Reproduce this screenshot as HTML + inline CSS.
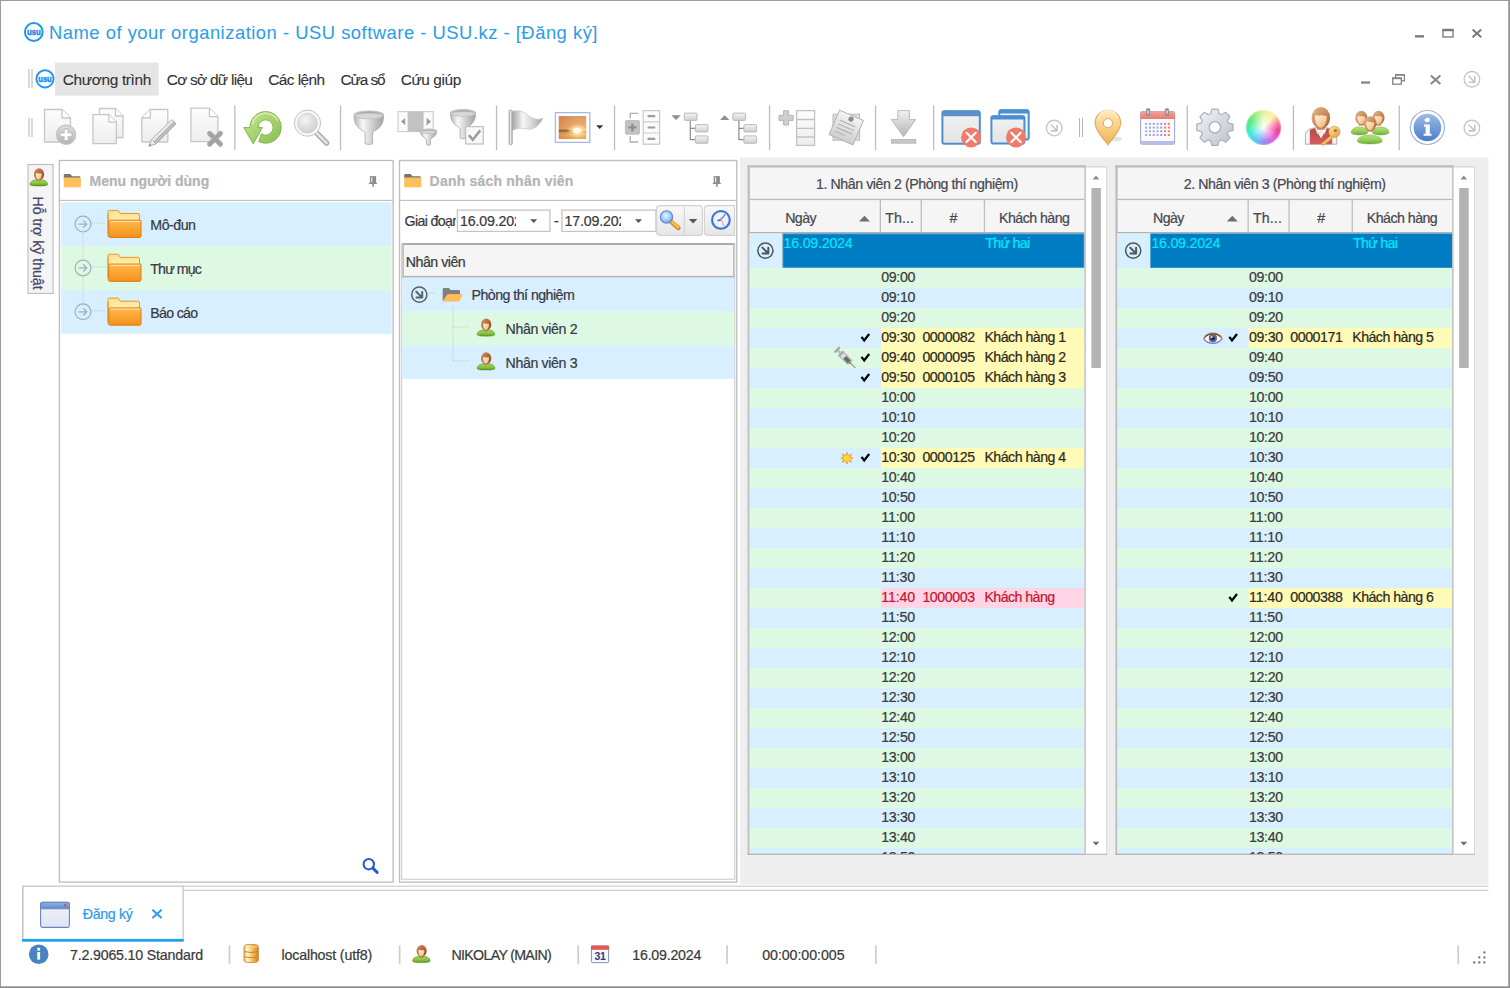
<!DOCTYPE html>
<html><head><meta charset="utf-8"><title>USU</title>
<style>
html,body{margin:0;padding:0;}
body{width:1510px;height:988px;position:relative;overflow:hidden;background:#fff;
 font-family:"Liberation Sans",sans-serif;}
div,span.t{position:absolute;}
span.t{white-space:nowrap;-webkit-text-stroke:0.22px currentColor;}
svg.ov{position:absolute;left:0;top:0;}
</style></head>
<body>
<div style="left:1246.2px;top:109.7px;width:35px;height:35px;border-radius:50%;background:radial-gradient(circle at 50% 50%,rgba(255,255,255,1) 0%,rgba(255,255,255,.7) 16%,rgba(255,255,255,0) 58%),conic-gradient(from 0deg,#dff5a4 0deg,#fff3a0 40deg,#f86a9c 80deg,#ee3f97 100deg,#e560dc 140deg,#9a86ea 175deg,#6ab4f4 200deg,#40e6ee 235deg,#40f0b0 265deg,#5ee878 300deg,#a8f090 335deg,#dff5a4 360deg);box-shadow:inset 0 0 2px rgba(255,255,255,.6);"></div>
<svg class="ov" width="1510" height="988" viewBox="0 0 1510 988"><defs>
<linearGradient id="gDoc" x1="0" y1="0" x2="0" y2="1"><stop offset="0" stop-color="#fdfdfd"/><stop offset="1" stop-color="#ededed"/></linearGradient>
<linearGradient id="gGray" x1="0" y1="0" x2="0" y2="1"><stop offset="0" stop-color="#e6e6e6"/><stop offset="1" stop-color="#a9a9a9"/></linearGradient>
<linearGradient id="gGray2" x1="0" y1="0" x2="0" y2="1"><stop offset="0" stop-color="#d2d2d2"/><stop offset="1" stop-color="#9a9a9a"/></linearGradient>
<linearGradient id="gGrayH" x1="0" y1="0" x2="1" y2="0"><stop offset="0" stop-color="#a4a4a4"/><stop offset=".35" stop-color="#f6f6f6"/><stop offset=".7" stop-color="#cfcfcf"/><stop offset="1" stop-color="#a0a0a0"/></linearGradient>
<linearGradient id="gBox" x1="0" y1="0" x2="0" y2="1"><stop offset="0" stop-color="#f4f4f4"/><stop offset="1" stop-color="#cfcfcf"/></linearGradient>
<linearGradient id="gFolder" x1="0" y1="0" x2="0" y2="1"><stop offset="0" stop-color="#ffc46a"/><stop offset=".12" stop-color="#ffb548"/><stop offset="1" stop-color="#f4901a"/></linearGradient>
<linearGradient id="gFolderB" x1="0" y1="0" x2="0" y2="1"><stop offset="0" stop-color="#ffdf8a"/><stop offset=".5" stop-color="#fff0b4"/><stop offset="1" stop-color="#ffd070"/></linearGradient>
<linearGradient id="gGreen" x1="0" y1="0" x2="1" y2="1"><stop offset="0" stop-color="#c8e89a"/><stop offset="1" stop-color="#86be4c"/></linearGradient>
<linearGradient id="gBody" x1="0" y1="0" x2="0" y2="1"><stop offset="0" stop-color="#a2d860"/><stop offset=".6" stop-color="#86c43c"/><stop offset="1" stop-color="#5c9422"/></linearGradient>
<linearGradient id="gSkin" x1="0" y1="0" x2="1" y2="1"><stop offset="0" stop-color="#fff0d8"/><stop offset=".6" stop-color="#f6cf9c"/><stop offset="1" stop-color="#d89a60"/></linearGradient>
<linearGradient id="gHair" x1="0" y1="0" x2="1" y2="1"><stop offset="0" stop-color="#d8935a"/><stop offset=".5" stop-color="#b8683a"/><stop offset="1" stop-color="#8a3c1c"/></linearGradient>
<linearGradient id="gHairL" x1="0" y1="0" x2="1" y2="1"><stop offset="0" stop-color="#e8bc90"/><stop offset=".5" stop-color="#c88c5c"/><stop offset="1" stop-color="#a0633a"/></linearGradient>
<linearGradient id="gBodyL" x1="0" y1="0" x2="0" y2="1"><stop offset="0" stop-color="#b8e284"/><stop offset=".6" stop-color="#92cc54"/><stop offset="1" stop-color="#6fa83a"/></linearGradient>
<linearGradient id="gPlus" x1="0" y1="0" x2="0" y2="1"><stop offset="0" stop-color="#dedede"/><stop offset="1" stop-color="#b2b2b2"/></linearGradient>
<linearGradient id="gSunL" x1="0" y1="0" x2="1" y2="0"><stop offset="0" stop-color="#c8703c" stop-opacity=".55"/><stop offset=".65" stop-color="#d88a50" stop-opacity="0"/></linearGradient>
<linearGradient id="gPencil" x1="0" y1="0" x2="0" y2="1"><stop offset="0" stop-color="#f4f4f4"/><stop offset=".5" stop-color="#d8d8d8"/><stop offset="1" stop-color="#b0b0b0"/></linearGradient>
<linearGradient id="gDown" x1="0" y1="0" x2="0" y2="1"><stop offset="0" stop-color="#f2f2f2"/><stop offset="1" stop-color="#b4b4b4"/></linearGradient>
<linearGradient id="gInfo" x1="0" y1="0" x2="0" y2="1"><stop offset="0" stop-color="#9cbce8"/><stop offset="1" stop-color="#4c7cc8"/></linearGradient>
<linearGradient id="gPin" x1="0" y1="0" x2="0" y2="1"><stop offset="0" stop-color="#ffe9b8"/><stop offset=".5" stop-color="#f8cf84"/><stop offset="1" stop-color="#eeb25a"/></linearGradient>
<linearGradient id="gGear" x1="0" y1="0" x2="1" y2="1"><stop offset="0" stop-color="#f2f4f7"/><stop offset="1" stop-color="#bcc2cc"/></linearGradient>
<linearGradient id="gSun" x1="0" y1="0" x2="0" y2="1"><stop offset="0" stop-color="#dd9a62"/><stop offset=".45" stop-color="#ecab6a"/><stop offset=".62" stop-color="#f6c27c"/><stop offset=".7" stop-color="#c89a58"/><stop offset=".8" stop-color="#f0bc6c"/><stop offset="1" stop-color="#e8a554"/></linearGradient>
<linearGradient id="gBtn" x1="0" y1="0" x2="0" y2="1"><stop offset="0" stop-color="#f8f8f8"/><stop offset="1" stop-color="#e6e6e6"/></linearGradient>
<linearGradient id="gWin" x1="0" y1="0" x2="0" y2="1"><stop offset="0" stop-color="#f2f2f2"/><stop offset="1" stop-color="#e4e4e4"/></linearGradient>
<linearGradient id="gDb" x1="0" y1="0" x2="1" y2="0"><stop offset="0" stop-color="#e8a850"/><stop offset=".2" stop-color="#fffbe4"/><stop offset=".5" stop-color="#f4d060"/><stop offset="1" stop-color="#dc7c28"/></linearGradient>
<linearGradient id="gRedCal" x1="0" y1="0" x2="0" y2="1"><stop offset="0" stop-color="#f4a49a"/><stop offset="1" stop-color="#e87c70"/></linearGradient>
<linearGradient id="gVest" x1="0" y1="0" x2="0" y2="1"><stop offset="0" stop-color="#b84848"/><stop offset="1" stop-color="#d85c5c"/></linearGradient>
<linearGradient id="gKey" x1="0" y1="0" x2="1" y2="1"><stop offset="0" stop-color="#ffe49c"/><stop offset="1" stop-color="#e8a03c"/></linearGradient>
<linearGradient id="gTabT" x1="0" y1="0" x2="0" y2="1"><stop offset="0" stop-color="#8eb4e4"/><stop offset="1" stop-color="#5c8ccc"/></linearGradient>
<linearGradient id="gTabB" x1="0" y1="0" x2="0" y2="1"><stop offset="0" stop-color="#f2f4fb"/><stop offset="1" stop-color="#dfe4f3"/></linearGradient>
<radialGradient id="gLens" cx=".4" cy=".35" r=".75"><stop offset="0" stop-color="#f4f4f4"/><stop offset="1" stop-color="#c6c6c6"/></radialGradient>
<radialGradient id="gLensB" cx=".45" cy=".4" r=".7"><stop offset="0" stop-color="#e4f6ff"/><stop offset=".5" stop-color="#9cd0fc"/><stop offset="1" stop-color="#4c8ce4"/></radialGradient>
<radialGradient id="gWhite" cx=".5" cy=".5" r=".5"><stop offset="0" stop-color="#fff" stop-opacity="1"/><stop offset=".35" stop-color="#fff" stop-opacity=".85"/><stop offset="1" stop-color="#fff" stop-opacity="0"/></radialGradient>
<radialGradient id="gSunSpot" cx=".5" cy=".5" r=".5"><stop offset="0" stop-color="#fffbe0" stop-opacity="1"/><stop offset=".4" stop-color="#ffe8a8" stop-opacity=".8"/><stop offset="1" stop-color="#ffd890" stop-opacity="0"/></radialGradient>
<radialGradient id="gClock" cx=".5" cy=".5" r=".5"><stop offset="0" stop-color="#ffffff"/><stop offset=".75" stop-color="#e8f2ff"/><stop offset="1" stop-color="#a8c8f8"/></radialGradient>
<linearGradient id="gBowl" x1="0" y1="0" x2="1" y2="0"><stop offset="0" stop-color="#b4b4b4"/><stop offset=".3" stop-color="#f8f8f8"/><stop offset=".65" stop-color="#cacaca"/><stop offset="1" stop-color="#a2a2a2"/></linearGradient>
<linearGradient id="gBowlIn" x1="0" y1="0" x2="0" y2="1"><stop offset="0" stop-color="#9a9a9a"/><stop offset="1" stop-color="#e8e8e8"/></linearGradient>
</defs>
<rect x="740.00" y="157.50" width="748.50" height="727.00" fill="#eeeeee"/>
<rect x="0.00" y="0.00" width="1510.00" height="1.00" fill="#9c9c9c"/>
<rect x="0.00" y="0.00" width="1.00" height="988.00" fill="#9c9c9c"/>
<rect x="1508.30" y="0.00" width="1.70" height="988.00" fill="#8e8e8e"/>
<rect x="0.00" y="986.30" width="1510.00" height="1.70" fill="#8e8e8e"/>
<g transform="translate(33.80,32.00)"><circle r="8.9" fill="#fff" stroke="#2196f3" stroke-width="2"/><text x="-6.93" y="3.1" font-family="Liberation Sans" font-weight="bold" font-size="9.4" fill="#1e88e5" stroke="#1e88e5" stroke-width=".45" textLength="13.86" lengthAdjust="spacingAndGlyphs">usu</text></g>
<rect x="1415" y="35.2" width="9" height="2.3" fill="#787878"/><rect x="1443" y="30.4" width="10" height="6.6" fill="none" stroke="#787878" stroke-width="1.3"/><rect x="1442.4" y="28.8" width="11.2" height="2.4" fill="#787878"/><path d="M1472.6,29.6 L1481.2,37.2 M1481.2,29.6 L1472.6,37.2" stroke="#787878" stroke-width="2"/>
<rect x="1361" y="81.4" width="9" height="2.3" fill="#858585"/><rect x="1395.6" y="74.8" width="8.8" height="6" fill="none" stroke="#858585" stroke-width="1.3"/><rect x="1392.7" y="78.2" width="8.6" height="6" fill="#fff" stroke="#858585" stroke-width="1.3"/><rect x="1392" y="77.4" width="10" height="1.8" fill="#858585"/><rect x="1395" y="74.1" width="10" height="1.6" fill="#858585"/><path d="M1430.8,75.6 L1440.4,84 M1440.4,75.6 L1430.8,84" stroke="#858585" stroke-width="2"/>
<g transform="translate(28.50,69.00)"><rect x="0" y="0" width="1" height="19" fill="#b4b4b4"/><rect x="3" y="0" width="1" height="19" fill="#b4b4b4"/></g>
<rect x="55.00" y="62.60" width="103.60" height="33.00" fill="#e5e5e5"/>
<g transform="translate(45.00,78.80)"><circle r="8.6" fill="#fff" stroke="#2196f3" stroke-width="2"/><text x="-6.72" y="3.1" font-family="Liberation Sans" font-weight="bold" font-size="9.4" fill="#1e88e5" stroke="#1e88e5" stroke-width=".45" textLength="13.44" lengthAdjust="spacingAndGlyphs">usu</text></g>
<g transform="translate(28.50,118.00)"><rect x="0" y="0" width="1" height="19" fill="#b4b4b4"/><rect x="3" y="0" width="1" height="19" fill="#b4b4b4"/></g>
<g transform="translate(1079.00,118.00)"><rect x="0" y="0" width="1" height="19" fill="#b4b4b4"/><rect x="3" y="0" width="1" height="19" fill="#b4b4b4"/></g>
<g transform="translate(234.20,105.50)"><rect x="0" y="0" width="1.3" height="44.5" fill="#bdbdbd"/></g>
<g transform="translate(339.90,105.50)"><rect x="0" y="0" width="1.3" height="44.5" fill="#bdbdbd"/></g>
<g transform="translate(495.90,105.50)"><rect x="0" y="0" width="1.3" height="44.5" fill="#bdbdbd"/></g>
<g transform="translate(613.90,105.50)"><rect x="0" y="0" width="1.3" height="44.5" fill="#bdbdbd"/></g>
<g transform="translate(768.90,105.50)"><rect x="0" y="0" width="1.3" height="44.5" fill="#bdbdbd"/></g>
<g transform="translate(874.90,105.50)"><rect x="0" y="0" width="1.3" height="44.5" fill="#bdbdbd"/></g>
<g transform="translate(933.00,105.50)"><rect x="0" y="0" width="1.3" height="44.5" fill="#bdbdbd"/></g>
<g transform="translate(1186.60,105.50)"><rect x="0" y="0" width="1.3" height="44.5" fill="#bdbdbd"/></g>
<g transform="translate(1292.80,105.50)"><rect x="0" y="0" width="1.3" height="44.5" fill="#bdbdbd"/></g>
<g transform="translate(1398.60,105.50)"><rect x="0" y="0" width="1.3" height="44.5" fill="#bdbdbd"/></g>
<g transform="translate(44.00,109.00)"><path d="M0.5,0.5 H18 L26.5,9 V33.0 H0.5 Z" fill="url(#gDoc)" stroke="#c6c6c6" stroke-width="1.3" stroke-linejoin="round"/><path d="M18,0.5 V9 H26.5" fill="#fff" stroke="#c6c6c6" stroke-width="1.3" stroke-linejoin="round"/></g>
<circle cx="66.1" cy="134.8" r="9.6" fill="url(#gPlus)" stroke="#c4c4c4" stroke-width="1.2"/><path d="M66.1,128.6 V141 M59.9,134.8 H72.3" stroke="#b6b6b6" stroke-width="4.6"/><path d="M66.1,129.4 V140.2 M60.7,134.8 H71.5" stroke="#fff" stroke-width="3"/>
<g transform="translate(99.00,108.00)"><path d="M0.5,0.5 H16.5 L24.0,8 V29.5 H0.5 Z" fill="url(#gDoc)" stroke="#c6c6c6" stroke-width="1.3" stroke-linejoin="round"/><path d="M16.5,0.5 V8 H24.0" fill="#fff" stroke="#c6c6c6" stroke-width="1.3" stroke-linejoin="round"/></g>
<g transform="translate(92.40,114.20)"><path d="M0.5,0.5 H16.5 L24.0,8 V29.5 H0.5 Z" fill="url(#gDoc)" stroke="#c6c6c6" stroke-width="1.3" stroke-linejoin="round"/><path d="M16.5,0.5 V8 H24.0" fill="#fff" stroke="#c6c6c6" stroke-width="1.3" stroke-linejoin="round"/></g>
<g transform="translate(141.30,109.00)"><path d="M9,0.5 H26.5 V33.0 H0.5 V9 Z" fill="url(#gDoc)" stroke="#c6c6c6" stroke-width="1.3" stroke-linejoin="round"/><path d="M9,0.5 V9 H0.5" fill="#fff" stroke="#c6c6c6" stroke-width="1.3" stroke-linejoin="round"/></g>
<g transform="translate(149,146.2) rotate(-44.5)"><path d="M0,0 L6.6,-3.1 H33.6 Q35.2,-3.1 35.2,-1.5 V1.5 Q35.2,3.1 33.6,3.1 H6.6 Z" fill="url(#gPencil)" stroke="#a6a6a6" stroke-width=".8"/><path d="M0,0 L6.6,-3.1 V3.1 Z" fill="#ececec" stroke="#a6a6a6" stroke-width=".6"/><path d="M0,0 L2.4,-1.1 V1.1 Z" fill="#808080"/><path d="M6.6,0.6 H35" stroke="#9a9a9a" stroke-width=".8"/></g>
<g transform="translate(190.40,107.70)"><path d="M0.5,0.5 H19 L27.5,9 V34.0 H0.5 Z" fill="url(#gDoc)" stroke="#c6c6c6" stroke-width="1.3" stroke-linejoin="round"/><path d="M19,0.5 V9 H27.5" fill="#fff" stroke="#c6c6c6" stroke-width="1.3" stroke-linejoin="round"/></g>
<path d="M209.6,133.4 L220.4,144.2 M220.4,133.4 L209.6,144.2" stroke="#adadad" stroke-width="5.2" stroke-linecap="round"/><path d="M209.6,133.4 L220.4,144.2 M220.4,133.4 L209.6,144.2" stroke="#949494" stroke-width="2.4" stroke-linecap="round" opacity=".5"/>
<path d="M250,127.6 A15.6,15.8 0 1 1 258.8,141.6 L261.3,133.8 A7.5,7.7 0 1 0 258.1,127.6 H262.4 L253.2,143.8 L243.7,127.6 Z" fill="url(#gGreen)" stroke="#86b84e" stroke-width="1" stroke-linejoin="round"/><path d="M252.4,124 A13.6,13.6 0 0 1 278,121" fill="none" stroke="#dcf2b8" stroke-width="1.6" opacity=".8"/>
<path d="M316.6,133 L326.6,143" stroke="#a9a9a9" stroke-width="5.4" stroke-linecap="round"/><path d="M316.6,133 L326.6,143" stroke="#e4e4e4" stroke-width="2.6" stroke-linecap="round"/><circle cx="307.5" cy="123.2" r="11.5" fill="url(#gLens)" stroke="#c2c2c2" stroke-width="1"/><circle cx="307.5" cy="123.2" r="11.5" fill="none" stroke="#f7f7f7" stroke-width="3"/><circle cx="307.5" cy="123.2" r="13.1" fill="none" stroke="#c4c4c4" stroke-width="1"/><circle cx="307.5" cy="123.2" r="9.8" fill="none" stroke="#cdcdcd" stroke-width=".9"/>
<path d="M354,114.26100000000001 C354,130.352 364.15000000000003,129.352 365.15000000000003,133.352 V143.7 Q368.85,145.29999999999998 372.55,143.7 V133.352 C373.55,129.352 383.7,130.352 383.7,114.26100000000001 Z" fill="url(#gBowl)" stroke="#a6a6a6" stroke-width=".8"/><ellipse cx="368.85" cy="114.861" rx="14.45" ry="3.861" fill="url(#gBowlIn)" stroke="#c4c4c4" stroke-width="1.2"/><ellipse cx="368.85" cy="115.66100000000002" rx="12.45" ry="2.3166" fill="#d9d9d9" opacity=".8"/>
<rect x="398" y="111.6" width="35.2" height="20" fill="#fbfbfb" stroke="#cfcfcf" stroke-width="1.2"/><rect x="407.6" y="111.6" width="16" height="20" fill="#c2c2c2"/><path d="M401,121.6 l4.2,-3.6 v7.2 Z M431,121.6 l-4.4,-3.8 v7.6 Z" fill="#9c9c9c"/>
<path d="M420.2,130.558 C420.2,137.40800000000002 425.5,136.40800000000002 426.5,140.40800000000002 V144.6 Q428.5,146.2 430.5,144.6 V140.40800000000002 C431.5,136.40800000000002 436.8,137.40800000000002 436.8,130.558 Z" fill="url(#gBowl)" stroke="#a6a6a6" stroke-width=".8"/><ellipse cx="428.5" cy="131.158" rx="7.9" ry="2.1580000000000004" fill="url(#gBowlIn)" stroke="#c4c4c4" stroke-width="1.2"/><ellipse cx="428.5" cy="131.958" rx="5.9" ry="1.2948000000000002" fill="#d9d9d9" opacity=".8"/>
<path d="M450.4,112.276 C450.4,126.328 459.2,125.328 460.2,129.328 V138.2 Q463.0,139.79999999999998 465.8,138.2 V129.328 C466.8,125.328 475.59999999999997,126.328 475.59999999999997,112.276 Z" fill="url(#gBowl)" stroke="#a6a6a6" stroke-width=".8"/><ellipse cx="463.0" cy="112.87599999999999" rx="12.2" ry="3.276" fill="url(#gBowlIn)" stroke="#c4c4c4" stroke-width="1.2"/><ellipse cx="463.0" cy="113.676" rx="10.2" ry="1.9655999999999998" fill="#d9d9d9" opacity=".8"/>
<rect x="465.6" y="126.6" width="17.6" height="17.4" fill="#f8f8f8" stroke="#c2c2c2" stroke-width="1.3"/><path d="M468.8,135.2 L472.8,139.8 L480.2,130.4" fill="none" stroke="#9e9e9e" stroke-width="2.6"/>
<path d="M512.2,111.4 C518,109.6 524,111.6 527,114.6 C531,118.6 538,120.4 543,118.2 C539,126.6 532,130.4 527.4,129.2 C522,127.6 517,128.2 512.2,130.6 Z" fill="url(#gGrayH)" stroke="#c9c9c9" stroke-width=".7"/><rect x="509" y="110" width="3.3" height="34.8" rx="1.2" fill="url(#gGrayH)" stroke="#9f9f9f" stroke-width=".7"/>
<rect x="555.4" y="112.6" width="34.4" height="29.8" fill="#fff" stroke="#a9b7e0" stroke-width="1.3"/><rect x="558.8" y="116" width="27.4" height="23" fill="url(#gSun)"/><rect x="558.8" y="116" width="27.4" height="23" fill="url(#gSunL)"/><path d="M558.8,129.6 H566 Q570,130 573,131 L566,131.8 H558.8 Z" fill="#7a5a34" opacity=".75"/><ellipse cx="577.4" cy="131" rx="10.5" ry="8" fill="url(#gSunSpot)"/><ellipse cx="577" cy="130.6" rx="4" ry="2.8" fill="#fffdf0" opacity=".9"/><path d="M596.2,125.2 h7 l-3.5,3.8 Z" fill="#333"/>
<path d="M630.2,118.6 V113.4 H638.4 M630.2,136 V142 H638.4" fill="none" stroke="#b0b0b0" stroke-width="1.3"/><rect x="625.4" y="120.6" width="14" height="13.6" rx="1" fill="#c3c3c3" stroke="#b2b2b2" stroke-width=".8"/><path d="M632.4,123.4 V131.4 M628.4,127.4 H636.4" stroke="#8e8e8e" stroke-width="2.2"/><rect x="643.2" y="110.6" width="16.4" height="33.6" fill="#fbfbfb" stroke="#cbcbcb" stroke-width="1.3"/><path d="M643.2,121.9 H659.6 M643.2,133 H659.6" stroke="#cbcbcb" stroke-width="1.2"/><path d="M647.6,116.2 H655.2 M647.6,127.5 H655.2 M647.6,138.8 H655.2" stroke="#9c9c9c" stroke-width="2.2"/>
<path d="M671.4,115.3 h9.4 l-4.7,4.8 Z" fill="#8e8e8e"/><path d="M690.3,120.4 V139.6 H695.3 M690.3,128.3 H695.3" fill="none" stroke="#8c8c8c" stroke-width="1.2"/><rect x="684.3" y="113.1" width="12.7" height="7.3" rx="1" fill="url(#gBox)" stroke="#b9b9b9" stroke-width="1"/><rect x="695.3" y="124.6" width="12.7" height="7.3" rx="1" fill="url(#gBox)" stroke="#b9b9b9" stroke-width="1"/><rect x="695.3" y="135.9" width="12.7" height="7.3" rx="1" fill="url(#gBox)" stroke="#b9b9b9" stroke-width="1"/>
<path d="M720,120 h9.4 l-4.7,-4.8 Z" fill="#8e8e8e"/><path d="M738.9,120.4 V139.6 H743.9 M738.9,128.3 H743.9" fill="none" stroke="#8c8c8c" stroke-width="1.2"/><rect x="732.9" y="113.1" width="12.7" height="7.3" rx="1" fill="url(#gBox)" stroke="#b9b9b9" stroke-width="1"/><rect x="743.9" y="124.6" width="12.7" height="7.3" rx="1" fill="url(#gBox)" stroke="#b9b9b9" stroke-width="1"/><rect x="743.9" y="135.9" width="12.7" height="7.3" rx="1" fill="url(#gBox)" stroke="#b9b9b9" stroke-width="1"/>
<path d="M783.6,110.8 h5 v4.6 h4.6 v5 h-4.6 v4.6 h-5 v-4.6 h-4.6 v-5 h4.6 Z" fill="#cfcfcf" stroke="#b4b4b4" stroke-width="1"/><rect x="796.6" y="110.6" width="18" height="34.8" fill="url(#gDoc)" stroke="#c2c2c2" stroke-width="1.3"/><path d="M796.6,119.5 H814.6 M796.6,128.3 H814.6 M796.6,137 H814.6" stroke="#c2c2c2" stroke-width="1.3"/>
<rect x="833" y="114.2" width="26.6" height="26" fill="#dedede" stroke="#b9b9b9" stroke-width="1"/><g transform="translate(839.6,110.2) rotate(23.5)"><rect x="0" y="0" width="26" height="26.4" fill="url(#gBox)" stroke="#b4b4b4" stroke-width="1"/><path d="M4,9 H21 M4,13 H21 M4,17 H21 M4,21 H15" stroke="#b3b3b3" stroke-width="1.2"/><circle cx="14" cy="3.6" r="2.6" fill="#8c8c8c"/></g>
<path d="M897.8,110.6 H909.4 V119.6 H915.6 L903.6,136.8 L891.4,119.6 H897.8 Z" fill="url(#gDown)" stroke="#b9b9b9" stroke-width="1" stroke-linejoin="round"/><rect x="891.4" y="139.4" width="24.4" height="3.8" fill="#c6c6c6" stroke="#b4b4b4" stroke-width=".8"/>
<rect x="942.4" y="111.3" width="37.4" height="32.4" rx="2" fill="url(#gWin)" stroke="#4a8fd2" stroke-width="2"/><path d="M942,113 Q942,110.6 944.4,110.6 H977.8 Q980.2,110.6 980.2,113 V116.2 H942 Z" fill="#5b8ecb"/>
<circle cx="971.1" cy="137.4" r="10" fill="#ef7b6c"/><path d="M966.5,132.8 L975.7,142.0 M975.7,132.8 L966.5,142.0" stroke="#fff" stroke-width="2.1" stroke-linecap="round"/>
<rect x="999.3" y="110.2" width="29.4" height="29.4" rx="2.4" fill="#f4f4f4" stroke="#4a8fd2" stroke-width="2"/><rect x="998.8" y="109.6" width="30.4" height="4" rx="1.6" fill="#4a8fd2"/><rect x="991.4" y="116.2" width="33" height="27.4" rx="2.4" fill="url(#gWin)" stroke="#4a8fd2" stroke-width="2"/><rect x="990.6" y="115.4" width="34.6" height="4.2" rx="1.8" fill="#4a8fd2"/>
<circle cx="1016" cy="137.4" r="10" fill="#ef7b6c"/><path d="M1011.4,132.8 L1020.6,142.0 M1020.6,132.8 L1011.4,142.0" stroke="#fff" stroke-width="2.1" stroke-linecap="round"/>
<g transform="translate(1054.20,128.00)"><circle r="7.8" fill="none" stroke="#c6c6c6" stroke-width="1.35"/><path d="M-3,-3 L2.4,2.4 M-2.8,2.9 H2.9 V-2.8" fill="none" stroke="#c6c6c6" stroke-width="1.6" stroke-linecap="round" stroke-linejoin="round"/></g>
<g transform="translate(1471.90,128.00)"><circle r="7.8" fill="none" stroke="#c6c6c6" stroke-width="1.35"/><path d="M-3,-3 L2.4,2.4 M-2.8,2.9 H2.9 V-2.8" fill="none" stroke="#c6c6c6" stroke-width="1.6" stroke-linecap="round" stroke-linejoin="round"/></g>
<g transform="translate(1471.90,79.30)"><circle r="7.8" fill="none" stroke="#c6c6c6" stroke-width="1.35"/><path d="M-3,-3 L2.4,2.4 M-2.8,2.9 H2.9 V-2.8" fill="none" stroke="#c6c6c6" stroke-width="1.6" stroke-linecap="round" stroke-linejoin="round"/></g>
<ellipse cx="1116" cy="139" rx="6" ry="2.6" fill="#000" opacity=".10"/><path d="M1107.9,144.8 C1104.5,139 1095.1,132 1095.1,123 A12.8,12.8 0 0 1 1120.7,123 C1120.7,132 1111.3,139 1107.9,144.8 Z" fill="url(#gPin)" stroke="#e2aa5c" stroke-width="1.1"/><path d="M1098,119 A10,10 0 0 1 1117.6,118" fill="none" stroke="#fff4d8" stroke-width="1.6" opacity=".8"/><circle cx="1107.9" cy="123.2" r="4.6" fill="#fff" stroke="#dba668" stroke-width="1"/>
<rect x="1140.6" y="111.6" width="34" height="32.6" rx="1.8" fill="#fafbff" stroke="#a2a9da" stroke-width="1.1"/><path d="M1140.2,113.4 Q1140.2,111.2 1142.4,111.2 H1172.8 Q1175,111.2 1175,113.4 V119 H1140.2 Z" fill="url(#gRedCal)"/><rect x="1140.6" y="141" width="34" height="3.2" fill="#b6bde6"/><rect x="1146.4" y="108.6" width="3.6" height="7" rx="1" fill="#8a96ae" stroke="#7c879e" stroke-width=".5"/><rect x="1165.2" y="108.6" width="3.6" height="7" rx="1" fill="#8a96ae" stroke="#7c879e" stroke-width=".5"/><rect x="1147.5" y="110.6" width="1.4" height="3" fill="#dfe3ee"/><rect x="1166.3" y="110.6" width="1.4" height="3" fill="#dfe3ee"/><rect x="1145.20" y="122.90" width="2" height="2" fill="#a3a7d6"/><rect x="1148.97" y="122.90" width="2" height="2" fill="#a3a7d6"/><rect x="1152.74" y="122.90" width="2" height="2" fill="#a3a7d6"/><rect x="1156.51" y="122.90" width="2" height="2" fill="#a3a7d6"/><rect x="1160.28" y="122.90" width="2" height="2" fill="#8fa0d2"/><rect x="1164.05" y="122.90" width="2" height="2" fill="#f2786a"/><rect x="1167.82" y="122.90" width="2" height="2" fill="#f2786a"/><rect x="1145.20" y="126.59" width="2" height="2" fill="#a3a7d6"/><rect x="1148.97" y="126.59" width="2" height="2" fill="#a3a7d6"/><rect x="1152.74" y="126.59" width="2" height="2" fill="#a3a7d6"/><rect x="1156.51" y="126.59" width="2" height="2" fill="#a3a7d6"/><rect x="1160.28" y="126.59" width="2" height="2" fill="#8fa0d2"/><rect x="1164.05" y="126.59" width="2" height="2" fill="#f2786a"/><rect x="1167.82" y="126.59" width="2" height="2" fill="#f2786a"/><rect x="1145.20" y="130.28" width="2" height="2" fill="#a3a7d6"/><rect x="1148.97" y="130.28" width="2" height="2" fill="#a3a7d6"/><rect x="1152.74" y="130.28" width="2" height="2" fill="#a3a7d6"/><rect x="1156.51" y="130.28" width="2" height="2" fill="#a3a7d6"/><rect x="1160.28" y="130.28" width="2" height="2" fill="#8fa0d2"/><rect x="1164.05" y="130.28" width="2" height="2" fill="#f2786a"/><rect x="1167.82" y="130.28" width="2" height="2" fill="#f2786a"/><rect x="1145.20" y="133.97" width="2" height="2" fill="#a3a7d6"/><rect x="1148.97" y="133.97" width="2" height="2" fill="#a3a7d6"/><rect x="1152.74" y="133.97" width="2" height="2" fill="#a3a7d6"/><rect x="1156.51" y="133.97" width="2" height="2" fill="#a3a7d6"/><rect x="1160.28" y="133.97" width="2" height="2" fill="#8fa0d2"/><rect x="1164.05" y="133.97" width="2" height="2" fill="#f2786a"/><rect x="1167.82" y="133.97" width="2" height="2" fill="#f2786a"/>
<path d="M1210.70,113.73 L1211.79,109.17 L1218.01,109.17 L1219.10,113.73 L1221.53,114.74 L1225.52,112.28 L1229.92,116.68 L1227.46,120.67 L1228.47,123.10 L1233.03,124.19 L1233.03,130.41 L1228.47,131.50 L1227.46,133.93 L1229.92,137.92 L1225.52,142.32 L1221.53,139.86 L1219.10,140.87 L1218.01,145.43 L1211.79,145.43 L1210.70,140.87 L1208.27,139.86 L1204.28,142.32 L1199.88,137.92 L1202.34,133.93 L1201.33,131.50 L1196.77,130.41 L1196.77,124.19 L1201.33,123.10 L1202.34,120.67 L1199.88,116.68 L1204.28,112.28 L1208.27,114.74 Z" fill="url(#gGear)" stroke="#a9afbb" stroke-width="1.2" stroke-linejoin="round"/><circle cx="1214.9" cy="127.3" r="5.7" fill="#fff" stroke="#a9afbb" stroke-width="1.3"/>
<path d="M1305.4,144.2 V135.4 Q1305.4,129.4 1313,128.2 L1321,127 L1329,128.2 Q1336.8,129.4 1336.8,135.4 V144.2 Z" fill="#f4f4f4" stroke="#a8a8a8" stroke-width=".9"/><path d="M1309.8,144.2 V130 L1315,128 L1321,138.6 L1327,128 L1332.2,130 V144.2 Z" fill="url(#gVest)"/><path d="M1315,127.6 L1321,130.4 L1327,127.6 L1324.4,134 L1321,131.6 L1317.6,134 Z" fill="#fdfdfd" stroke="#b8b8b8" stroke-width=".5"/>
<g transform="translate(1320.90,107.30) scale(1.5)"><path d="M-2.6,11 H2.6 V15 H-2.6 Z" fill="#d09060"/><ellipse cx="0" cy="7" rx="6.2" ry="7.2" fill="url(#gHairL)"/><path d="M-3.9,5.6 C-2.4,4.8 -1,6.2 0.2,5.2 C1.6,6 3,5.4 3.9,5.8 C4.2,9.8 2.6,13.6 0,13.6 C-2.6,13.6 -4.2,9.8 -3.9,5.6 Z" fill="url(#gSkin)"/></g>
<g transform="translate(1334.4,131.8)"><path d="M-3.2,3.4 L-13.4,12.2 L-11,13.6 L-1.2,5.6 Z" fill="url(#gKey)" stroke="#d69a3e" stroke-width=".7"/><circle r="5.6" fill="url(#gKey)" stroke="#d69a3e" stroke-width=".8"/><circle cx="1" cy="-1.2" r="1.7" fill="#b07840"/></g>
<path d="M1351.1,132.5 C1351.1,125.13999999999999 1367.9,125.13999999999999 1367.9,132.5 C1367.9,135.72 1351.1,135.72 1351.1,132.5 Z" fill="url(#gBodyL)" stroke="#78b040" stroke-width=".5"/><path d="M1372.1999999999998,132.5 C1372.1999999999998,125.13999999999999 1389.0,125.13999999999999 1389.0,132.5 C1389.0,135.72 1372.1999999999998,135.72 1372.1999999999998,132.5 Z" fill="url(#gBodyL)" stroke="#78b040" stroke-width=".5"/>
<g transform="translate(1361.30,111.00) scale(0.98)"><path d="M-2.6,11 H2.6 V15 H-2.6 Z" fill="#d09060"/><ellipse cx="0" cy="7" rx="6.2" ry="7.2" fill="url(#gHairL)"/><path d="M-3.9,5.6 C-2.4,4.8 -1,6.2 0.2,5.2 C1.6,6 3,5.4 3.9,5.8 C4.2,9.8 2.6,13.6 0,13.6 C-2.6,13.6 -4.2,9.8 -3.9,5.6 Z" fill="url(#gSkin)"/></g><g transform="translate(1378.50,111.00) scale(0.98)"><path d="M-2.6,11 H2.6 V15 H-2.6 Z" fill="#d09060"/><ellipse cx="0" cy="7" rx="6.2" ry="7.2" fill="url(#gHairL)"/><path d="M-3.9,5.6 C-2.4,4.8 -1,6.2 0.2,5.2 C1.6,6 3,5.4 3.9,5.8 C4.2,9.8 2.6,13.6 0,13.6 C-2.6,13.6 -4.2,9.8 -3.9,5.6 Z" fill="url(#gSkin)"/></g>
<path d="M1357.3999999999999,141.2 C1357.3999999999999,132.88 1382.2,132.88 1382.2,141.2 C1382.2,144.84 1357.3999999999999,144.84 1357.3999999999999,141.2 Z" fill="url(#gBodyL)" stroke="#78b040" stroke-width=".5"/>
<g transform="translate(1370.20,116.40) scale(1.02)"><path d="M-2.6,11 H2.6 V15 H-2.6 Z" fill="#d09060"/><ellipse cx="0" cy="7" rx="6.2" ry="7.2" fill="url(#gHairL)"/><path d="M-3.9,5.6 C-2.4,4.8 -1,6.2 0.2,5.2 C1.6,6 3,5.4 3.9,5.8 C4.2,9.8 2.6,13.6 0,13.6 C-2.6,13.6 -4.2,9.8 -3.9,5.6 Z" fill="url(#gSkin)"/></g>
<circle cx="1427.4" cy="127.5" r="17" fill="#fff" stroke="#a9b2dc" stroke-width="1.2"/><circle cx="1427.4" cy="127.5" r="13.8" fill="url(#gInfo)"/><ellipse cx="1427.2" cy="120" rx="2.7" ry="2.2" fill="#fff" transform="rotate(-18 1427.2 120)"/><path d="M1424,124.4 H1429.8 V133.8 H1431.6 V135.8 H1423.6 V133.8 H1425.6 V126.4 H1424 Z" fill="#fff"/>
<rect x="28.00" y="164.50" width="25.10" height="128.90" rx="0" fill="#f4f4f4" stroke="#bcbcbc" stroke-width="1.1"/>
<g transform="translate(29.80,168.40)"><path d="M0.2,16 C0.2,12.8 4,11 9,11 C14,11 17.8,12.8 17.8,16 C17.8,17.2 14,17.6 9,17.6 C4,17.6 0.2,17.2 0.2,16 Z" fill="url(#gBody)" stroke="#4a8420" stroke-width=".5"/><path d="M6.8,9.5 H11.2 V12.2 C10.4,13.2 7.6,13.2 6.8,12.2 Z" fill="#c88050"/><ellipse cx="9.2" cy="5.8" rx="5.1" ry="5.9" fill="url(#gHair)"/><path d="M6.1,5.2 C7.2,4.4 8.4,5.6 9.2,4.9 C10.2,5.4 11.4,5 11.9,5.4 C12.2,8.4 11,11.4 9,11.4 C7,11.4 5.8,8.4 6.1,5.2 Z" fill="url(#gSkin)"/></g>
<rect x="59.40" y="160.50" width="333.70" height="721.60" rx="0" fill="#fff" stroke="#bcbcbc" stroke-width="1.3"/>
<rect x="60.00" y="199.80" width="333.00" height="1.20" fill="#c2c2c2"/>
<g transform="translate(63.60,173.80)"><path d="M0.2,1.2 Q0.2,0.1 1.3,0.1 H6.6 L8.6,2.5 H16.6 V5 H0.2 Z" fill="#757575"/><rect x="0.2" y="3.7" width="17.1" height="9.9" fill="#ffc05c"/></g>
<g transform="translate(368.60,176.00)"><rect x="1.3" y="0.1" width="6.2" height="6.9" fill="#8c8c8c"/><rect x="2.6" y="1.3" width="1.2" height="5" fill="#ededed"/><path d="M-0.1,8.1 L1.2,6.6 H7.6 L8.9,8.1 Z" fill="#8c8c8c"/><rect x="3.7" y="8" width="1.6" height="2.8" fill="#8c8c8c"/></g>
<rect x="61.00" y="202.30" width="330.60" height="43.90" fill="#d7efff"/>
<g transform="translate(83.00,224.10)"><circle r="7.9" fill="none" stroke="#9db1bf" stroke-width="1.2"/><path d="M-4,0 H3.6 M0.6,-3.2 L3.8,0 L0.6,3.2" fill="none" stroke="#9db1bf" stroke-width="1.3" stroke-linecap="round" stroke-linejoin="round"/></g>
<path d="M91.6,223.1 H105" stroke="#b7c3cc" stroke-width="1" stroke-dasharray="1,1.4"/>
<g transform="translate(107.00,209.90)"><path d="M1,2 Q1,0.5 2.5,0.5 H10.5 Q11.8,0.5 12.4,1.8 L13.2,3.6 H31 Q32.5,3.6 32.5,5 V24 H1 Z" fill="url(#gFolderB)" stroke="#e8952c" stroke-width="1"/><path d="M2.8,10.3 H33.2 Q34,10.3 34,11.2 V26 Q34,27.6 32.4,27.6 H3.2 Q1.8,27.6 1.8,26 V11.2 Q1.8,10.3 2.8,10.3 Z" fill="url(#gFolder)" stroke="#e07c12" stroke-width="1"/><path d="M3,11.6 H32.8" stroke="#ffe2a8" stroke-width="1.1"/><path d="M1,4 V27" stroke="#e8861c" stroke-width="1" opacity=".7"/></g>
<rect x="61.00" y="246.15" width="330.60" height="43.90" fill="#ddf9e3"/>
<g transform="translate(83.00,267.95)"><circle r="7.9" fill="none" stroke="#9db1bf" stroke-width="1.2"/><path d="M-4,0 H3.6 M0.6,-3.2 L3.8,0 L0.6,3.2" fill="none" stroke="#9db1bf" stroke-width="1.3" stroke-linecap="round" stroke-linejoin="round"/></g>
<path d="M91.6,266.9 H105" stroke="#b7c3cc" stroke-width="1" stroke-dasharray="1,1.4"/>
<g transform="translate(107.00,253.75)"><path d="M1,2 Q1,0.5 2.5,0.5 H10.5 Q11.8,0.5 12.4,1.8 L13.2,3.6 H31 Q32.5,3.6 32.5,5 V24 H1 Z" fill="url(#gFolderB)" stroke="#e8952c" stroke-width="1"/><path d="M2.8,10.3 H33.2 Q34,10.3 34,11.2 V26 Q34,27.6 32.4,27.6 H3.2 Q1.8,27.6 1.8,26 V11.2 Q1.8,10.3 2.8,10.3 Z" fill="url(#gFolder)" stroke="#e07c12" stroke-width="1"/><path d="M3,11.6 H32.8" stroke="#ffe2a8" stroke-width="1.1"/><path d="M1,4 V27" stroke="#e8861c" stroke-width="1" opacity=".7"/></g>
<rect x="61.00" y="290.00" width="330.60" height="43.90" fill="#d7efff"/>
<g transform="translate(83.00,311.80)"><circle r="7.9" fill="none" stroke="#9db1bf" stroke-width="1.2"/><path d="M-4,0 H3.6 M0.6,-3.2 L3.8,0 L0.6,3.2" fill="none" stroke="#9db1bf" stroke-width="1.3" stroke-linecap="round" stroke-linejoin="round"/></g>
<path d="M91.6,310.8 H105" stroke="#b7c3cc" stroke-width="1" stroke-dasharray="1,1.4"/>
<g transform="translate(107.00,297.60)"><path d="M1,2 Q1,0.5 2.5,0.5 H10.5 Q11.8,0.5 12.4,1.8 L13.2,3.6 H31 Q32.5,3.6 32.5,5 V24 H1 Z" fill="url(#gFolderB)" stroke="#e8952c" stroke-width="1"/><path d="M2.8,10.3 H33.2 Q34,10.3 34,11.2 V26 Q34,27.6 32.4,27.6 H3.2 Q1.8,27.6 1.8,26 V11.2 Q1.8,10.3 2.8,10.3 Z" fill="url(#gFolder)" stroke="#e07c12" stroke-width="1"/><path d="M3,11.6 H32.8" stroke="#ffe2a8" stroke-width="1.1"/><path d="M1,4 V27" stroke="#e8861c" stroke-width="1" opacity=".7"/></g>
<path d="M83,232.5 V259.7" stroke="#b7c3cc" stroke-width="1" stroke-dasharray="1,1.4"/>
<path d="M83,276.3 V303.6" stroke="#b7c3cc" stroke-width="1" stroke-dasharray="1,1.4"/>
<circle cx="368.8" cy="864.2" r="5.2" fill="none" stroke="#2260c8" stroke-width="2.1"/><path d="M372.8,868.2 L377.2,872.4" stroke="#2260c8" stroke-width="3" stroke-linecap="round"/>
<rect x="399.50" y="160.50" width="337.30" height="721.60" rx="0" fill="#fff" stroke="#c0c0c0" stroke-width="1.4"/>
<rect x="400.00" y="199.80" width="336.00" height="1.20" fill="#c2c2c2"/>
<g transform="translate(404.00,173.80)"><path d="M0.2,1.2 Q0.2,0.1 1.3,0.1 H6.6 L8.6,2.5 H16.6 V5 H0.2 Z" fill="#757575"/><rect x="0.2" y="3.7" width="17.1" height="9.9" fill="#ffc05c"/></g>
<g transform="translate(712.40,176.00)"><rect x="1.3" y="0.1" width="6.2" height="6.9" fill="#8c8c8c"/><rect x="2.6" y="1.3" width="1.2" height="5" fill="#ededed"/><path d="M-0.1,8.1 L1.2,6.6 H7.6 L8.9,8.1 Z" fill="#8c8c8c"/><rect x="3.7" y="8" width="1.6" height="2.8" fill="#8c8c8c"/></g>
<rect x="457.40" y="210.10" width="92.50" height="21.30" rx="0" fill="#fff" stroke="#c4c4c4" stroke-width="1.3"/>
<path d="M530.2,219.2 h7 l-3.5,3.9 Z" fill="#555"/>
<rect x="561.90" y="210.10" width="94.10" height="21.30" rx="0" fill="#fff" stroke="#c4c4c4" stroke-width="1.3"/>
<path d="M635,219.2 h7 l-3.5,3.9 Z" fill="#555"/>
<rect x="656.6" y="205.6" width="45.8" height="29.8" rx="3.2" fill="url(#gBtn)" stroke="#d2d2d2" stroke-width="1.1"/><path d="M684.3,206 V235" stroke="#d0d0d0" stroke-width="1"/><path d="M671,221.6 L678.4,228" stroke="#c98a28" stroke-width="4.4" stroke-linecap="round"/><path d="M671.4,221.4 L678.2,227.4" stroke="#f8c24a" stroke-width="2.4" stroke-linecap="round"/><circle cx="666.5" cy="216.9" r="6.2" fill="url(#gLensB)" stroke="#6f80c4" stroke-width="1.1"/><path d="M688.8,219 h8.6 l-4.3,4.6 Z" fill="#585858"/>
<path d="M707.6,205.6 H734.6 V235.4 H707.6 Q704.4,235.4 704.4,232.2 V208.8 Q704.4,205.6 707.6,205.6 Z" fill="url(#gBtn)" stroke="#d2d2d2" stroke-width="1.1"/><circle cx="720.9" cy="219.9" r="8.9" fill="url(#gClock)" stroke="#3b73d4" stroke-width="2"/><path d="M720.9,219.9 L725.2,214.4" stroke="#5c7ee0" stroke-width="1.4"/><path d="M720.9,219.9 L717.4,220.6" stroke="#4a64d0" stroke-width="1.6"/><path d="M720.6,217 L723.6,226" stroke="#f4a090" stroke-width="1.2"/>
<rect x="401.60" y="243.80" width="333.10" height="635.50" rx="0" fill="#fff" stroke="#d4d4d4" stroke-width="1.3"/>
<rect x="402.30" y="243.00" width="332.20" height="34.70" fill="#f5f5f5"/>
<rect x="402.30" y="243.00" width="332.20" height="2.00" fill="#ababab"/>
<rect x="402.30" y="275.90" width="332.20" height="1.80" fill="#b2b2b2"/>
<rect x="402.30" y="243.00" width="1.60" height="34.70" fill="#b9b9b9"/>
<rect x="733.10" y="243.00" width="1.40" height="34.70" fill="#b9b9b9"/>
<rect x="402.30" y="277.60" width="332.00" height="34.20" fill="#d7efff"/>
<rect x="402.30" y="311.50" width="332.00" height="34.20" fill="#ddf9e3"/>
<rect x="402.30" y="345.30" width="332.00" height="33.60" fill="#d7efff"/>
<g transform="translate(419.30,294.70)"><circle r="7.6" fill="none" stroke="#59616b" stroke-width="1.5"/><path d="M-3,-3 L2.4,2.4 M-2.8,2.9 H2.9 V-2.8" fill="none" stroke="#59616b" stroke-width="2.0" stroke-linecap="round" stroke-linejoin="round"/></g>
<path d="M429,293 H435" stroke="#b7c3cc" stroke-width="1" stroke-dasharray="1,1.4"/>
<g transform="translate(442.40,287.80)"><path d="M0.3,1.4 Q0.3,0.2 1.5,0.2 H6.4 L8.2,2.3 H16.4 Q17.6,2.3 17.6,3.5 V7 H5 L0.3,13.6 Z" fill="#808080"/><path d="M5.4,6.4 H20.6 L17,13.8 H0.3 Z" fill="#ffbe58"/></g>
<path d="M453.1,305.4 V361 M453.1,327.1 H470 M453.1,361 H469.4" fill="none" stroke="#b9c2c8" stroke-width="1" stroke-dasharray="1,1.4"/>
<g transform="translate(477.00,318.60)"><path d="M0.2,16 C0.2,12.8 4,11 9,11 C14,11 17.8,12.8 17.8,16 C17.8,17.2 14,17.6 9,17.6 C4,17.6 0.2,17.2 0.2,16 Z" fill="url(#gBody)" stroke="#4a8420" stroke-width=".5"/><path d="M6.8,9.5 H11.2 V12.2 C10.4,13.2 7.6,13.2 6.8,12.2 Z" fill="#c88050"/><ellipse cx="9.2" cy="5.8" rx="5.1" ry="5.9" fill="url(#gHair)"/><path d="M6.1,5.2 C7.2,4.4 8.4,5.6 9.2,4.9 C10.2,5.4 11.4,5 11.9,5.4 C12.2,8.4 11,11.4 9,11.4 C7,11.4 5.8,8.4 6.1,5.2 Z" fill="url(#gSkin)"/></g>
<g transform="translate(477.00,352.40)"><path d="M0.2,16 C0.2,12.8 4,11 9,11 C14,11 17.8,12.8 17.8,16 C17.8,17.2 14,17.6 9,17.6 C4,17.6 0.2,17.2 0.2,16 Z" fill="url(#gBody)" stroke="#4a8420" stroke-width=".5"/><path d="M6.8,9.5 H11.2 V12.2 C10.4,13.2 7.6,13.2 6.8,12.2 Z" fill="#c88050"/><ellipse cx="9.2" cy="5.8" rx="5.1" ry="5.9" fill="url(#gHair)"/><path d="M6.1,5.2 C7.2,4.4 8.4,5.6 9.2,4.9 C10.2,5.4 11.4,5 11.9,5.4 C12.2,8.4 11,11.4 9,11.4 C7,11.4 5.8,8.4 6.1,5.2 Z" fill="url(#gSkin)"/></g>
<rect x="747.60" y="165.20" width="337.80" height="689.60" fill="#f5f5f5"/>
<rect x="747.60" y="165.20" width="2.20" height="689.60" fill="#bcbcbc"/>
<rect x="747.60" y="165.20" width="337.80" height="2.40" fill="#bdbdbd"/>
<rect x="749.40" y="198.80" width="334.80" height="1.30" fill="#b9b9b9"/>
<rect x="749.40" y="232.00" width="334.80" height="1.40" fill="#b2b2b2"/>
<rect x="879.70" y="200.00" width="1.30" height="32.00" fill="#bdbdbd"/>
<rect x="920.60" y="200.00" width="1.30" height="32.00" fill="#bdbdbd"/>
<rect x="983.80" y="200.00" width="1.30" height="32.00" fill="#bdbdbd"/>
<path d="M859,221.4 h11 l-5.5,-5.6 Z" fill="#6e6e6e"/>
<rect x="749.40" y="233.40" width="334.90" height="34.80" fill="#d7efff"/>
<rect x="782.60" y="233.50" width="301.70" height="34.30" fill="#007cc3"/>
<rect x="783.10" y="234.00" width="300.70" height="33.30" rx="0" fill="none" stroke="#e08a4a" stroke-width="1" stroke-dasharray="1,1"/>
<g transform="translate(765.40,250.60)"><circle r="7.6" fill="none" stroke="#4f565e" stroke-width="1.5"/><path d="M-3,-3 L2.4,2.4 M-2.8,2.9 H2.9 V-2.8" fill="none" stroke="#4f565e" stroke-width="2.0" stroke-linecap="round" stroke-linejoin="round"/></g>
<rect x="749.40" y="268.00" width="334.90" height="20.10" fill="#ddf9e3"/>
<rect x="749.40" y="288.00" width="334.90" height="20.10" fill="#d7efff"/>
<rect x="749.40" y="308.00" width="334.90" height="20.10" fill="#ddf9e3"/>
<rect x="749.40" y="328.00" width="334.90" height="20.10" fill="#d7efff"/>
<rect x="880.90" y="328.00" width="203.40" height="20.10" fill="#fffbb6"/>
<g transform="translate(860.60,333.00)"><path d="M0.9,3.9 L3.6,7.4 L8.6,1" fill="none" stroke="#000" stroke-width="2.3" stroke-linejoin="miter"/></g>
<rect x="749.40" y="348.00" width="334.90" height="20.10" fill="#ddf9e3"/>
<rect x="880.90" y="348.00" width="203.40" height="20.10" fill="#fffbb6"/>
<g transform="translate(860.60,353.00)"><path d="M0.9,3.9 L3.6,7.4 L8.6,1" fill="none" stroke="#000" stroke-width="2.3" stroke-linejoin="miter"/></g>
<g transform="translate(836.00,348.60)"><g transform="rotate(45)"><rect x="0.6" y="-3.8" width="2.2" height="7.6" rx=".6" fill="#a4a4a4"/><rect x="2.6" y="-1.3" width="4" height="2.6" fill="#bcbcbc"/><rect x="6" y="-3.7" width="2.2" height="7.4" rx=".6" fill="#b0b0b0"/><rect x="8" y="-2.9" width="11.6" height="5.8" rx="1" fill="#dcdcdc" stroke="#909090" stroke-width=".8"/><rect x="12.4" y="-2.1" width="6.4" height="4.2" fill="#6a6a6a"/><path d="M19.6,-1.6 L22,0 L19.6,1.6 Z" fill="#8a8a8a"/><path d="M21.4,0 H27.4" stroke="#a2a2a2" stroke-width="1.5"/></g></g>
<rect x="749.40" y="368.00" width="334.90" height="20.10" fill="#d7efff"/>
<rect x="880.90" y="368.00" width="203.40" height="20.10" fill="#fffbb6"/>
<g transform="translate(860.60,373.00)"><path d="M0.9,3.9 L3.6,7.4 L8.6,1" fill="none" stroke="#000" stroke-width="2.3" stroke-linejoin="miter"/></g>
<rect x="749.40" y="388.00" width="334.90" height="20.10" fill="#ddf9e3"/>
<rect x="749.40" y="408.00" width="334.90" height="20.10" fill="#d7efff"/>
<rect x="749.40" y="428.00" width="334.90" height="20.10" fill="#ddf9e3"/>
<rect x="749.40" y="448.00" width="334.90" height="20.10" fill="#d7efff"/>
<rect x="880.90" y="448.00" width="203.40" height="20.10" fill="#fffbb6"/>
<g transform="translate(860.60,453.00)"><path d="M0.9,3.9 L3.6,7.4 L8.6,1" fill="none" stroke="#000" stroke-width="2.3" stroke-linejoin="miter"/></g>
<g transform="translate(846.90,458.20)"><path d="M0,-5.8 L1.5,-2.3 L4.6,-4.3 L3.2,-1.1 L6,0 L3.2,1.1 L4.6,4.3 L1.5,2.3 L0,5.8 L-1.5,2.3 L-4.6,4.3 L-3.2,1.1 L-6,0 L-3.2,-1.1 L-4.6,-4.3 L-1.5,-2.3 Z" fill="#ffd83a" stroke="#f2a13a" stroke-width="1"/></g>
<rect x="749.40" y="468.00" width="334.90" height="20.10" fill="#ddf9e3"/>
<rect x="749.40" y="488.00" width="334.90" height="20.10" fill="#d7efff"/>
<rect x="749.40" y="508.00" width="334.90" height="20.10" fill="#ddf9e3"/>
<rect x="749.40" y="528.00" width="334.90" height="20.10" fill="#d7efff"/>
<rect x="749.40" y="548.00" width="334.90" height="20.10" fill="#ddf9e3"/>
<rect x="749.40" y="568.00" width="334.90" height="20.10" fill="#d7efff"/>
<rect x="749.40" y="588.00" width="334.90" height="20.10" fill="#ddf9e3"/>
<rect x="880.90" y="588.00" width="203.40" height="20.10" fill="#ffd4e5"/>
<rect x="749.40" y="608.00" width="334.90" height="20.10" fill="#d7efff"/>
<rect x="749.40" y="628.00" width="334.90" height="20.10" fill="#ddf9e3"/>
<rect x="749.40" y="648.00" width="334.90" height="20.10" fill="#d7efff"/>
<rect x="749.40" y="668.00" width="334.90" height="20.10" fill="#ddf9e3"/>
<rect x="749.40" y="688.00" width="334.90" height="20.10" fill="#d7efff"/>
<rect x="749.40" y="708.00" width="334.90" height="20.10" fill="#ddf9e3"/>
<rect x="749.40" y="728.00" width="334.90" height="20.10" fill="#d7efff"/>
<rect x="749.40" y="748.00" width="334.90" height="20.10" fill="#ddf9e3"/>
<rect x="749.40" y="768.00" width="334.90" height="20.10" fill="#d7efff"/>
<rect x="749.40" y="788.00" width="334.90" height="20.10" fill="#ddf9e3"/>
<rect x="749.40" y="808.00" width="334.90" height="20.10" fill="#d7efff"/>
<rect x="749.40" y="828.00" width="334.90" height="20.10" fill="#ddf9e3"/>
<rect x="749.40" y="848.00" width="334.90" height="6.20" fill="#d7efff"/>
<rect x="1084.50" y="165.40" width="1.10" height="689.20" fill="#b4b4b4"/>
<rect x="747.60" y="853.70" width="338.00" height="1.10" fill="#a8a8a8"/>
<rect x="1086.20" y="166.40" width="20.80" height="688.40" fill="#fff"/>
<rect x="1086.20" y="166.20" width="20.80" height="1.20" fill="#cfcfcf"/>
<rect x="1106.20" y="166.40" width="1.00" height="688.40" fill="#d8d8d8"/>
<rect x="1086.20" y="853.70" width="21.00" height="1.10" fill="#b4b4b4"/>
<path d="M1092.6,179.4 h6.8 l-3.4,-3.8 Z" fill="#8c8c8c"/>
<path d="M1092.6,841.8 h6.8 l-3.4,3.8 Z" fill="#6c6c6c"/>
<rect x="1091.40" y="188.00" width="9.50" height="180.00" fill="#b3b3b3"/>
<rect x="1115.40" y="165.20" width="337.80" height="689.60" fill="#f5f5f5"/>
<rect x="1115.40" y="165.20" width="2.20" height="689.60" fill="#bcbcbc"/>
<rect x="1115.40" y="165.20" width="337.80" height="2.40" fill="#bdbdbd"/>
<rect x="1117.20" y="198.80" width="334.80" height="1.30" fill="#b9b9b9"/>
<rect x="1117.20" y="232.00" width="334.80" height="1.40" fill="#b2b2b2"/>
<rect x="1247.50" y="200.00" width="1.30" height="32.00" fill="#bdbdbd"/>
<rect x="1288.40" y="200.00" width="1.30" height="32.00" fill="#bdbdbd"/>
<rect x="1351.60" y="200.00" width="1.30" height="32.00" fill="#bdbdbd"/>
<path d="M1226.8,221.4 h11 l-5.5,-5.6 Z" fill="#6e6e6e"/>
<rect x="1117.20" y="233.40" width="334.90" height="34.80" fill="#d7efff"/>
<rect x="1150.40" y="233.50" width="301.70" height="34.30" fill="#007cc3"/>
<g transform="translate(1133.20,250.60)"><circle r="7.6" fill="none" stroke="#4f565e" stroke-width="1.5"/><path d="M-3,-3 L2.4,2.4 M-2.8,2.9 H2.9 V-2.8" fill="none" stroke="#4f565e" stroke-width="2.0" stroke-linecap="round" stroke-linejoin="round"/></g>
<rect x="1117.20" y="268.00" width="334.90" height="20.10" fill="#ddf9e3"/>
<rect x="1117.20" y="288.00" width="334.90" height="20.10" fill="#d7efff"/>
<rect x="1117.20" y="308.00" width="334.90" height="20.10" fill="#ddf9e3"/>
<rect x="1117.20" y="328.00" width="334.90" height="20.10" fill="#d7efff"/>
<rect x="1248.70" y="328.00" width="203.40" height="20.10" fill="#fffbb6"/>
<g transform="translate(1228.40,333.00)"><path d="M0.9,3.9 L3.6,7.4 L8.6,1" fill="none" stroke="#000" stroke-width="2.3" stroke-linejoin="miter"/></g>
<g transform="translate(1212.90,338.20)"><path d="M-9.2,0.4 C-5,-6 5,-6 9.2,0.4 C5,6.4 -5,6.4 -9.2,0.4 Z" fill="#fff"/><circle cx="0" cy="0" r="4.1" fill="#5a6a94"/><circle cx="0" cy="0.2" r="2" fill="#232a4a"/><circle cx="-1.2" cy="-1.2" r="1" fill="#dfe6f5"/><path d="M-9.2,0.4 C-5,-6.4 5,-6.4 9.2,0.4" fill="none" stroke="#c98650" stroke-width="1.8"/><path d="M-7.6,-1.6 C-4,-5.2 4,-5.2 7.6,-1.6" fill="none" stroke="#2a2a3a" stroke-width="1" opacity=".8"/><path d="M-9.2,0.4 C-5,6.6 5,6.6 9.2,0.4" fill="none" stroke="#7d7fcb" stroke-width="1.5"/></g>
<rect x="1117.20" y="348.00" width="334.90" height="20.10" fill="#ddf9e3"/>
<rect x="1117.20" y="368.00" width="334.90" height="20.10" fill="#d7efff"/>
<rect x="1117.20" y="388.00" width="334.90" height="20.10" fill="#ddf9e3"/>
<rect x="1117.20" y="408.00" width="334.90" height="20.10" fill="#d7efff"/>
<rect x="1117.20" y="428.00" width="334.90" height="20.10" fill="#ddf9e3"/>
<rect x="1117.20" y="448.00" width="334.90" height="20.10" fill="#d7efff"/>
<rect x="1117.20" y="468.00" width="334.90" height="20.10" fill="#ddf9e3"/>
<rect x="1117.20" y="488.00" width="334.90" height="20.10" fill="#d7efff"/>
<rect x="1117.20" y="508.00" width="334.90" height="20.10" fill="#ddf9e3"/>
<rect x="1117.20" y="528.00" width="334.90" height="20.10" fill="#d7efff"/>
<rect x="1117.20" y="548.00" width="334.90" height="20.10" fill="#ddf9e3"/>
<rect x="1117.20" y="568.00" width="334.90" height="20.10" fill="#d7efff"/>
<rect x="1117.20" y="588.00" width="334.90" height="20.10" fill="#ddf9e3"/>
<rect x="1248.70" y="588.00" width="203.40" height="20.10" fill="#fffbb6"/>
<g transform="translate(1228.40,593.00)"><path d="M0.9,3.9 L3.6,7.4 L8.6,1" fill="none" stroke="#000" stroke-width="2.3" stroke-linejoin="miter"/></g>
<rect x="1117.20" y="608.00" width="334.90" height="20.10" fill="#d7efff"/>
<rect x="1117.20" y="628.00" width="334.90" height="20.10" fill="#ddf9e3"/>
<rect x="1117.20" y="648.00" width="334.90" height="20.10" fill="#d7efff"/>
<rect x="1117.20" y="668.00" width="334.90" height="20.10" fill="#ddf9e3"/>
<rect x="1117.20" y="688.00" width="334.90" height="20.10" fill="#d7efff"/>
<rect x="1117.20" y="708.00" width="334.90" height="20.10" fill="#ddf9e3"/>
<rect x="1117.20" y="728.00" width="334.90" height="20.10" fill="#d7efff"/>
<rect x="1117.20" y="748.00" width="334.90" height="20.10" fill="#ddf9e3"/>
<rect x="1117.20" y="768.00" width="334.90" height="20.10" fill="#d7efff"/>
<rect x="1117.20" y="788.00" width="334.90" height="20.10" fill="#ddf9e3"/>
<rect x="1117.20" y="808.00" width="334.90" height="20.10" fill="#d7efff"/>
<rect x="1117.20" y="828.00" width="334.90" height="20.10" fill="#ddf9e3"/>
<rect x="1117.20" y="848.00" width="334.90" height="6.20" fill="#d7efff"/>
<rect x="1452.30" y="165.40" width="1.10" height="689.20" fill="#b4b4b4"/>
<rect x="1115.40" y="853.70" width="338.00" height="1.10" fill="#a8a8a8"/>
<rect x="1454.00" y="166.40" width="20.80" height="688.40" fill="#fff"/>
<rect x="1454.00" y="166.20" width="20.80" height="1.20" fill="#cfcfcf"/>
<rect x="1474.00" y="166.40" width="1.00" height="688.40" fill="#d8d8d8"/>
<rect x="1454.00" y="853.70" width="21.00" height="1.10" fill="#b4b4b4"/>
<path d="M1460.3999999999999,179.4 h6.8 l-3.4,-3.8 Z" fill="#8c8c8c"/>
<path d="M1460.3999999999999,841.8 h6.8 l-3.4,3.8 Z" fill="#6c6c6c"/>
<rect x="1459.20" y="188.00" width="9.50" height="180.00" fill="#b3b3b3"/>
<rect x="22.00" y="885.60" width="1466.50" height="1.30" fill="#d2d2d2"/>
<rect x="22.00" y="889.70" width="1466.50" height="1.20" fill="#cdcdcd"/>
<rect x="22.00" y="885.60" width="161.80" height="53.60" fill="#fff"/>
<rect x="22.00" y="885.60" width="1.50" height="53.60" fill="#c0c0c0"/>
<rect x="182.40" y="885.60" width="1.40" height="53.60" fill="#cbcbcb"/>
<rect x="22.00" y="885.60" width="161.80" height="1.30" fill="#cdcdcd"/>
<rect x="22.00" y="938.90" width="161.80" height="2.80" fill="#1ea2ee"/>
<rect x="40.6" y="902.4" width="28.8" height="25" rx="1.8" fill="url(#gTabB)" stroke="#6d83ba" stroke-width="1.1"/><path d="M40.6,904 Q40.6,902.4 42.2,902.4 H67.8 Q69.4,902.4 69.4,904 V908.8 H40.6 Z" fill="url(#gTabT)" stroke="#5f7fc0" stroke-width=".8"/><circle cx="65.1" cy="905.4" r="1.3" fill="#e8483c"/>
<path d="M152.4,909.8 L161.6,918 M161.6,909.8 L152.4,918" stroke="#2b9ce8" stroke-width="2"/>
<circle cx="38.7" cy="954.2" r="9.8" fill="#4a82c0"/><rect x="37.3" y="947.8" width="2.8" height="2.8" fill="#fff"/><rect x="37.3" y="952" width="2.8" height="7.6" fill="#fff"/>
<rect x="228.60" y="945.40" width="1.70" height="18.40" fill="#cdcdcd"/>
<rect x="398.80" y="945.40" width="1.70" height="18.40" fill="#cdcdcd"/>
<rect x="577.40" y="945.40" width="1.70" height="18.40" fill="#cdcdcd"/>
<rect x="726.20" y="945.40" width="1.70" height="18.40" fill="#cdcdcd"/>
<rect x="875.00" y="945.40" width="1.70" height="18.40" fill="#cdcdcd"/>
<rect x="1457.40" y="945.40" width="1.70" height="18.40" fill="#cdcdcd"/>
<path d="M244,946.4 Q244,944.4 251.2,944.4 Q258.4,944.4 258.4,946.4 V960.4 Q258.4,962.6 251.2,962.6 Q244,962.6 244,960.4 Z" fill="url(#gDb)" stroke="#d99242" stroke-width="1"/><path d="M244.4,951.6 Q251.2,953.4 258,951.6 M244.4,956.8 Q251.2,958.6 258,956.8" fill="none" stroke="#d27c30" stroke-width="1"/><path d="M244.6,946.6 Q251.2,948.2 257.8,946.6" fill="none" stroke="#f4d9a4" stroke-width=".9"/>
<g transform="translate(412.40,945.00)"><path d="M0.2,16 C0.2,12.8 4,11 9,11 C14,11 17.8,12.8 17.8,16 C17.8,17.2 14,17.6 9,17.6 C4,17.6 0.2,17.2 0.2,16 Z" fill="url(#gBody)" stroke="#4a8420" stroke-width=".5"/><path d="M6.8,9.5 H11.2 V12.2 C10.4,13.2 7.6,13.2 6.8,12.2 Z" fill="#c88050"/><ellipse cx="9.2" cy="5.8" rx="5.1" ry="5.9" fill="url(#gHair)"/><path d="M6.1,5.2 C7.2,4.4 8.4,5.6 9.2,4.9 C10.2,5.4 11.4,5 11.9,5.4 C12.2,8.4 11,11.4 9,11.4 C7,11.4 5.8,8.4 6.1,5.2 Z" fill="url(#gSkin)"/></g>
<rect x="591.4" y="946" width="17.2" height="16.6" rx="1" fill="#f5f7ff" stroke="#7f8fca" stroke-width="1"/><rect x="591" y="945.6" width="18" height="4.2" fill="#e8584c"/><text x="600" y="960.4" text-anchor="middle" font-family="Liberation Sans" font-weight="bold" font-size="10.5" fill="#2e3c78" letter-spacing="-0.4">31</text>
<rect x="1483.40" y="951.40" width="2.00" height="2.00" fill="#6a6a6a"/>
<rect x="1478.30" y="956.40" width="2.00" height="2.00" fill="#6a6a6a"/>
<rect x="1483.40" y="956.40" width="2.00" height="2.00" fill="#6a6a6a"/>
<rect x="1473.20" y="961.40" width="2.00" height="2.00" fill="#6a6a6a"/>
<rect x="1478.30" y="961.40" width="2.00" height="2.00" fill="#6a6a6a"/>
<rect x="1483.40" y="961.40" width="2.00" height="2.00" fill="#6a6a6a"/>
</svg>
<span id="t0" class="t" style="left:49.00px;top:24.22px;font-size:18.4px;line-height:18.4px;color:#2b9ce8;letter-spacing:0.505px;-webkit-text-stroke:0;">Name of your organization - USU software - USU.kz - [Đăng ký]</span>
<span id="t1" class="t" style="left:62.80px;top:72.46px;font-size:15.4px;line-height:15.4px;color:#333;letter-spacing:-0.339px;-webkit-text-stroke:0.1px;">Chương trình</span>
<span id="t2" class="t" style="left:166.80px;top:72.46px;font-size:15.4px;line-height:15.4px;color:#333;letter-spacing:-0.720px;-webkit-text-stroke:0.1px;">Cơ sở dữ liệu</span>
<span id="t3" class="t" style="left:268.20px;top:72.46px;font-size:15.4px;line-height:15.4px;color:#333;letter-spacing:-0.544px;-webkit-text-stroke:0.1px;">Các lệnh</span>
<span id="t4" class="t" style="left:340.40px;top:72.46px;font-size:15.4px;line-height:15.4px;color:#333;letter-spacing:-1.053px;-webkit-text-stroke:0.1px;">Cửa sổ</span>
<span id="t5" class="t" style="left:400.70px;top:72.46px;font-size:15.4px;line-height:15.4px;color:#333;letter-spacing:-0.407px;-webkit-text-stroke:0.1px;">Cứu giúp</span>
<span id="t6" class="t" style="left:0.00px;top:0.00px;font-size:14.2px;line-height:14.2px;color:#44476a;letter-spacing:-0.046px;transform-origin:0 0;transform:translate(45.2px,196.6px) rotate(90deg);">Hỗ trợ kỹ thuật</span>
<span id="t7" class="t" style="left:89.60px;top:173.95px;font-size:14px;line-height:14px;color:#b4b4b4;letter-spacing:-0.002px;font-weight:bold;">Menu người dùng</span>
<span id="t8" class="t" style="left:150.30px;top:217.98px;font-size:14.2px;line-height:14.2px;color:#3a3a46;letter-spacing:-0.485px;">Mô-đun</span>
<span id="t9" class="t" style="left:150.30px;top:261.83px;font-size:14.2px;line-height:14.2px;color:#3a3a46;letter-spacing:-0.859px;">Thư mục</span>
<span id="t10" class="t" style="left:150.30px;top:305.68px;font-size:14.2px;line-height:14.2px;color:#3a3a46;letter-spacing:-0.695px;">Báo cáo</span>
<span id="t11" class="t" style="left:429.60px;top:173.95px;font-size:14px;line-height:14px;color:#b4b4b4;letter-spacing:0.208px;font-weight:bold;">Danh sách nhân viên</span>
<span id="t12" class="t" style="left:404.60px;top:213.98px;font-size:14.2px;line-height:14.2px;color:#3a3a3a;letter-spacing:-0.637px;width:51.6px;overflow:hidden;">Giai đoạn</span>
<span id="t13" class="t" style="left:460.00px;top:213.98px;font-size:14.2px;line-height:14.2px;color:#3a3a3a;letter-spacing:-0.142px;width:56.4px;overflow:hidden;">16.09.2024</span>
<span id="t14" class="t" style="left:554.00px;top:213.98px;font-size:14.2px;line-height:14.2px;color:#3a3a3a;">-</span>
<span id="t15" class="t" style="left:564.40px;top:213.98px;font-size:14.2px;line-height:14.2px;color:#3a3a3a;letter-spacing:-0.142px;width:56.4px;overflow:hidden;">17.09.2024</span>
<span id="t16" class="t" style="left:405.80px;top:254.58px;font-size:14.2px;line-height:14.2px;color:#3a3a3a;letter-spacing:-0.499px;">Nhân viên</span>
<span id="t17" class="t" style="left:471.60px;top:288.38px;font-size:14.2px;line-height:14.2px;color:#3a3a46;letter-spacing:-0.539px;">Phòng thí nghiệm</span>
<span id="t18" class="t" style="left:505.60px;top:322.28px;font-size:14.2px;line-height:14.2px;color:#3a3a46;letter-spacing:-0.374px;">Nhân viên 2</span>
<span id="t19" class="t" style="left:505.60px;top:356.08px;font-size:14.2px;line-height:14.2px;color:#3a3a46;letter-spacing:-0.374px;">Nhân viên 3</span>
<span id="t20" class="t" style="left:816.00px;top:177.28px;font-size:14.2px;line-height:14.2px;color:#484850;letter-spacing:-0.434px;">1. Nhân viên 2 (Phòng thí nghiệm)</span>
<span id="t21" class="t" style="left:785.20px;top:210.98px;font-size:14.2px;line-height:14.2px;color:#484850;letter-spacing:-0.581px;">Ngày</span>
<span id="t22" class="t" style="left:885.20px;top:210.98px;font-size:14.2px;line-height:14.2px;color:#484850;letter-spacing:0.122px;">Th...</span>
<span id="t23" class="t" style="left:949.40px;top:210.98px;font-size:14.2px;line-height:14.2px;color:#484850;letter-spacing:0.709px;">#</span>
<span id="t24" class="t" style="left:999.00px;top:210.98px;font-size:14.2px;line-height:14.2px;color:#484850;letter-spacing:-0.533px;">Khách hàng</span>
<span id="t25" class="t" style="left:783.60px;top:235.58px;font-size:14.2px;line-height:14.2px;color:#00e6ff;letter-spacing:-0.222px;">16.09.2024</span>
<span id="t26" class="t" style="left:985.20px;top:235.58px;font-size:14.2px;line-height:14.2px;color:#00e6ff;letter-spacing:-0.677px;">Thứ hai</span>
<span id="t27" class="t" style="left:881.20px;top:269.98px;font-size:14.2px;line-height:14.2px;color:#3a3a3a;letter-spacing:-0.343px;">09:00</span>
<span id="t28" class="t" style="left:881.20px;top:289.98px;font-size:14.2px;line-height:14.2px;color:#3a3a3a;letter-spacing:-0.343px;">09:10</span>
<span id="t29" class="t" style="left:881.20px;top:309.98px;font-size:14.2px;line-height:14.2px;color:#3a3a3a;letter-spacing:-0.343px;">09:20</span>
<span id="t30" class="t" style="left:922.40px;top:329.98px;font-size:14.2px;line-height:14.2px;color:#2e2a1c;letter-spacing:-0.419px;">0000082</span>
<span id="t31" class="t" style="left:984.40px;top:329.98px;font-size:14.2px;line-height:14.2px;color:#2e2a1c;letter-spacing:-0.523px;">Khách hàng 1</span>
<span id="t32" class="t" style="left:881.20px;top:329.98px;font-size:14.2px;line-height:14.2px;color:#2e2a1c;letter-spacing:-0.343px;">09:30</span>
<span id="t33" class="t" style="left:922.40px;top:349.98px;font-size:14.2px;line-height:14.2px;color:#2e2a1c;letter-spacing:-0.419px;">0000095</span>
<span id="t34" class="t" style="left:984.40px;top:349.98px;font-size:14.2px;line-height:14.2px;color:#2e2a1c;letter-spacing:-0.523px;">Khách hàng 2</span>
<span id="t35" class="t" style="left:881.20px;top:349.98px;font-size:14.2px;line-height:14.2px;color:#2e2a1c;letter-spacing:-0.343px;">09:40</span>
<span id="t36" class="t" style="left:922.40px;top:369.98px;font-size:14.2px;line-height:14.2px;color:#2e2a1c;letter-spacing:-0.419px;">0000105</span>
<span id="t37" class="t" style="left:984.40px;top:369.98px;font-size:14.2px;line-height:14.2px;color:#2e2a1c;letter-spacing:-0.523px;">Khách hàng 3</span>
<span id="t38" class="t" style="left:881.20px;top:369.98px;font-size:14.2px;line-height:14.2px;color:#2e2a1c;letter-spacing:-0.343px;">09:50</span>
<span id="t39" class="t" style="left:881.20px;top:389.98px;font-size:14.2px;line-height:14.2px;color:#3a3a3a;letter-spacing:-0.343px;">10:00</span>
<span id="t40" class="t" style="left:881.20px;top:409.98px;font-size:14.2px;line-height:14.2px;color:#3a3a3a;letter-spacing:-0.343px;">10:10</span>
<span id="t41" class="t" style="left:881.20px;top:429.98px;font-size:14.2px;line-height:14.2px;color:#3a3a3a;letter-spacing:-0.343px;">10:20</span>
<span id="t42" class="t" style="left:922.40px;top:449.98px;font-size:14.2px;line-height:14.2px;color:#2e2a1c;letter-spacing:-0.419px;">0000125</span>
<span id="t43" class="t" style="left:984.40px;top:449.98px;font-size:14.2px;line-height:14.2px;color:#2e2a1c;letter-spacing:-0.523px;">Khách hàng 4</span>
<span id="t44" class="t" style="left:881.20px;top:449.98px;font-size:14.2px;line-height:14.2px;color:#2e2a1c;letter-spacing:-0.343px;">10:30</span>
<span id="t45" class="t" style="left:881.20px;top:469.98px;font-size:14.2px;line-height:14.2px;color:#3a3a3a;letter-spacing:-0.343px;">10:40</span>
<span id="t46" class="t" style="left:881.20px;top:489.98px;font-size:14.2px;line-height:14.2px;color:#3a3a3a;letter-spacing:-0.343px;">10:50</span>
<span id="t47" class="t" style="left:881.20px;top:509.98px;font-size:14.2px;line-height:14.2px;color:#3a3a3a;letter-spacing:-0.131px;">11:00</span>
<span id="t48" class="t" style="left:881.20px;top:529.98px;font-size:14.2px;line-height:14.2px;color:#3a3a3a;letter-spacing:-0.131px;">11:10</span>
<span id="t49" class="t" style="left:881.20px;top:549.98px;font-size:14.2px;line-height:14.2px;color:#3a3a3a;letter-spacing:-0.131px;">11:20</span>
<span id="t50" class="t" style="left:881.20px;top:569.98px;font-size:14.2px;line-height:14.2px;color:#3a3a3a;letter-spacing:-0.131px;">11:30</span>
<span id="t51" class="t" style="left:922.40px;top:589.98px;font-size:14.2px;line-height:14.2px;color:#c5142f;letter-spacing:-0.419px;">1000003</span>
<span id="t52" class="t" style="left:984.40px;top:589.98px;font-size:14.2px;line-height:14.2px;color:#c5142f;letter-spacing:-0.553px;">Khách hàng</span>
<span id="t53" class="t" style="left:881.20px;top:589.98px;font-size:14.2px;line-height:14.2px;color:#c5142f;letter-spacing:-0.131px;">11:40</span>
<span id="t54" class="t" style="left:881.20px;top:609.98px;font-size:14.2px;line-height:14.2px;color:#3a3a3a;letter-spacing:-0.131px;">11:50</span>
<span id="t55" class="t" style="left:881.20px;top:629.98px;font-size:14.2px;line-height:14.2px;color:#3a3a3a;letter-spacing:-0.343px;">12:00</span>
<span id="t56" class="t" style="left:881.20px;top:649.98px;font-size:14.2px;line-height:14.2px;color:#3a3a3a;letter-spacing:-0.343px;">12:10</span>
<span id="t57" class="t" style="left:881.20px;top:669.98px;font-size:14.2px;line-height:14.2px;color:#3a3a3a;letter-spacing:-0.343px;">12:20</span>
<span id="t58" class="t" style="left:881.20px;top:689.98px;font-size:14.2px;line-height:14.2px;color:#3a3a3a;letter-spacing:-0.343px;">12:30</span>
<span id="t59" class="t" style="left:881.20px;top:709.98px;font-size:14.2px;line-height:14.2px;color:#3a3a3a;letter-spacing:-0.343px;">12:40</span>
<span id="t60" class="t" style="left:881.20px;top:729.98px;font-size:14.2px;line-height:14.2px;color:#3a3a3a;letter-spacing:-0.343px;">12:50</span>
<span id="t61" class="t" style="left:881.20px;top:749.98px;font-size:14.2px;line-height:14.2px;color:#3a3a3a;letter-spacing:-0.343px;">13:00</span>
<span id="t62" class="t" style="left:881.20px;top:769.98px;font-size:14.2px;line-height:14.2px;color:#3a3a3a;letter-spacing:-0.343px;">13:10</span>
<span id="t63" class="t" style="left:881.20px;top:789.98px;font-size:14.2px;line-height:14.2px;color:#3a3a3a;letter-spacing:-0.343px;">13:20</span>
<span id="t64" class="t" style="left:881.20px;top:809.98px;font-size:14.2px;line-height:14.2px;color:#3a3a3a;letter-spacing:-0.343px;">13:30</span>
<span id="t65" class="t" style="left:881.20px;top:829.98px;font-size:14.2px;line-height:14.2px;color:#3a3a3a;letter-spacing:-0.343px;">13:40</span>
<span id="t66" class="t" style="left:881.20px;top:849.98px;font-size:14.2px;line-height:14.2px;color:#3a3a3a;letter-spacing:-0.343px;height:3.8px;overflow:hidden;">13:50</span>
<span id="t67" class="t" style="left:1183.80px;top:177.28px;font-size:14.2px;line-height:14.2px;color:#484850;letter-spacing:-0.434px;">2. Nhân viên 3 (Phòng thí nghiệm)</span>
<span id="t68" class="t" style="left:1153.00px;top:210.98px;font-size:14.2px;line-height:14.2px;color:#484850;letter-spacing:-0.581px;">Ngày</span>
<span id="t69" class="t" style="left:1253.00px;top:210.98px;font-size:14.2px;line-height:14.2px;color:#484850;letter-spacing:0.122px;">Th...</span>
<span id="t70" class="t" style="left:1317.20px;top:210.98px;font-size:14.2px;line-height:14.2px;color:#484850;letter-spacing:0.709px;">#</span>
<span id="t71" class="t" style="left:1366.80px;top:210.98px;font-size:14.2px;line-height:14.2px;color:#484850;letter-spacing:-0.533px;">Khách hàng</span>
<span id="t72" class="t" style="left:1151.40px;top:235.58px;font-size:14.2px;line-height:14.2px;color:#00e6ff;letter-spacing:-0.222px;">16.09.2024</span>
<span id="t73" class="t" style="left:1353.00px;top:235.58px;font-size:14.2px;line-height:14.2px;color:#00e6ff;letter-spacing:-0.677px;">Thứ hai</span>
<span id="t74" class="t" style="left:1249.00px;top:269.98px;font-size:14.2px;line-height:14.2px;color:#3a3a3a;letter-spacing:-0.343px;">09:00</span>
<span id="t75" class="t" style="left:1249.00px;top:289.98px;font-size:14.2px;line-height:14.2px;color:#3a3a3a;letter-spacing:-0.343px;">09:10</span>
<span id="t76" class="t" style="left:1249.00px;top:309.98px;font-size:14.2px;line-height:14.2px;color:#3a3a3a;letter-spacing:-0.343px;">09:20</span>
<span id="t77" class="t" style="left:1290.20px;top:329.98px;font-size:14.2px;line-height:14.2px;color:#2e2a1c;letter-spacing:-0.419px;">0000171</span>
<span id="t78" class="t" style="left:1352.20px;top:329.98px;font-size:14.2px;line-height:14.2px;color:#2e2a1c;letter-spacing:-0.523px;">Khách hàng 5</span>
<span id="t79" class="t" style="left:1249.00px;top:329.98px;font-size:14.2px;line-height:14.2px;color:#2e2a1c;letter-spacing:-0.343px;">09:30</span>
<span id="t80" class="t" style="left:1249.00px;top:349.98px;font-size:14.2px;line-height:14.2px;color:#3a3a3a;letter-spacing:-0.343px;">09:40</span>
<span id="t81" class="t" style="left:1249.00px;top:369.98px;font-size:14.2px;line-height:14.2px;color:#3a3a3a;letter-spacing:-0.343px;">09:50</span>
<span id="t82" class="t" style="left:1249.00px;top:389.98px;font-size:14.2px;line-height:14.2px;color:#3a3a3a;letter-spacing:-0.343px;">10:00</span>
<span id="t83" class="t" style="left:1249.00px;top:409.98px;font-size:14.2px;line-height:14.2px;color:#3a3a3a;letter-spacing:-0.343px;">10:10</span>
<span id="t84" class="t" style="left:1249.00px;top:429.98px;font-size:14.2px;line-height:14.2px;color:#3a3a3a;letter-spacing:-0.343px;">10:20</span>
<span id="t85" class="t" style="left:1249.00px;top:449.98px;font-size:14.2px;line-height:14.2px;color:#3a3a3a;letter-spacing:-0.343px;">10:30</span>
<span id="t86" class="t" style="left:1249.00px;top:469.98px;font-size:14.2px;line-height:14.2px;color:#3a3a3a;letter-spacing:-0.343px;">10:40</span>
<span id="t87" class="t" style="left:1249.00px;top:489.98px;font-size:14.2px;line-height:14.2px;color:#3a3a3a;letter-spacing:-0.343px;">10:50</span>
<span id="t88" class="t" style="left:1249.00px;top:509.98px;font-size:14.2px;line-height:14.2px;color:#3a3a3a;letter-spacing:-0.131px;">11:00</span>
<span id="t89" class="t" style="left:1249.00px;top:529.98px;font-size:14.2px;line-height:14.2px;color:#3a3a3a;letter-spacing:-0.131px;">11:10</span>
<span id="t90" class="t" style="left:1249.00px;top:549.98px;font-size:14.2px;line-height:14.2px;color:#3a3a3a;letter-spacing:-0.131px;">11:20</span>
<span id="t91" class="t" style="left:1249.00px;top:569.98px;font-size:14.2px;line-height:14.2px;color:#3a3a3a;letter-spacing:-0.131px;">11:30</span>
<span id="t92" class="t" style="left:1290.20px;top:589.98px;font-size:14.2px;line-height:14.2px;color:#2e2a1c;letter-spacing:-0.419px;">0000388</span>
<span id="t93" class="t" style="left:1352.20px;top:589.98px;font-size:14.2px;line-height:14.2px;color:#2e2a1c;letter-spacing:-0.523px;">Khách hàng 6</span>
<span id="t94" class="t" style="left:1249.00px;top:589.98px;font-size:14.2px;line-height:14.2px;color:#2e2a1c;letter-spacing:-0.131px;">11:40</span>
<span id="t95" class="t" style="left:1249.00px;top:609.98px;font-size:14.2px;line-height:14.2px;color:#3a3a3a;letter-spacing:-0.131px;">11:50</span>
<span id="t96" class="t" style="left:1249.00px;top:629.98px;font-size:14.2px;line-height:14.2px;color:#3a3a3a;letter-spacing:-0.343px;">12:00</span>
<span id="t97" class="t" style="left:1249.00px;top:649.98px;font-size:14.2px;line-height:14.2px;color:#3a3a3a;letter-spacing:-0.343px;">12:10</span>
<span id="t98" class="t" style="left:1249.00px;top:669.98px;font-size:14.2px;line-height:14.2px;color:#3a3a3a;letter-spacing:-0.343px;">12:20</span>
<span id="t99" class="t" style="left:1249.00px;top:689.98px;font-size:14.2px;line-height:14.2px;color:#3a3a3a;letter-spacing:-0.343px;">12:30</span>
<span id="t100" class="t" style="left:1249.00px;top:709.98px;font-size:14.2px;line-height:14.2px;color:#3a3a3a;letter-spacing:-0.343px;">12:40</span>
<span id="t101" class="t" style="left:1249.00px;top:729.98px;font-size:14.2px;line-height:14.2px;color:#3a3a3a;letter-spacing:-0.343px;">12:50</span>
<span id="t102" class="t" style="left:1249.00px;top:749.98px;font-size:14.2px;line-height:14.2px;color:#3a3a3a;letter-spacing:-0.343px;">13:00</span>
<span id="t103" class="t" style="left:1249.00px;top:769.98px;font-size:14.2px;line-height:14.2px;color:#3a3a3a;letter-spacing:-0.343px;">13:10</span>
<span id="t104" class="t" style="left:1249.00px;top:789.98px;font-size:14.2px;line-height:14.2px;color:#3a3a3a;letter-spacing:-0.343px;">13:20</span>
<span id="t105" class="t" style="left:1249.00px;top:809.98px;font-size:14.2px;line-height:14.2px;color:#3a3a3a;letter-spacing:-0.343px;">13:30</span>
<span id="t106" class="t" style="left:1249.00px;top:829.98px;font-size:14.2px;line-height:14.2px;color:#3a3a3a;letter-spacing:-0.343px;">13:40</span>
<span id="t107" class="t" style="left:1249.00px;top:849.98px;font-size:14.2px;line-height:14.2px;color:#3a3a3a;letter-spacing:-0.343px;height:3.8px;overflow:hidden;">13:50</span>
<span id="t108" class="t" style="left:82.80px;top:906.68px;font-size:14.2px;line-height:14.2px;color:#2b9ce8;letter-spacing:-0.350px;">Đăng ký</span>
<span id="t109" class="t" style="left:70.00px;top:947.98px;font-size:14.2px;line-height:14.2px;color:#3a3a3a;letter-spacing:-0.174px;">7.2.9065.10 Standard</span>
<span id="t110" class="t" style="left:281.50px;top:947.98px;font-size:14.2px;line-height:14.2px;color:#3a3a3a;letter-spacing:-0.160px;">localhost (utf8)</span>
<span id="t111" class="t" style="left:451.50px;top:947.98px;font-size:14.2px;line-height:14.2px;color:#3a3a3a;letter-spacing:-0.683px;">NIKOLAY (MAIN)</span>
<span id="t112" class="t" style="left:632.30px;top:947.98px;font-size:14.2px;line-height:14.2px;color:#3a3a3a;letter-spacing:-0.222px;">16.09.2024</span>
<span id="t113" class="t" style="left:762.20px;top:947.98px;font-size:14.2px;line-height:14.2px;color:#3a3a3a;letter-spacing:-0.045px;">00:00:00:005</span>
</body></html>
